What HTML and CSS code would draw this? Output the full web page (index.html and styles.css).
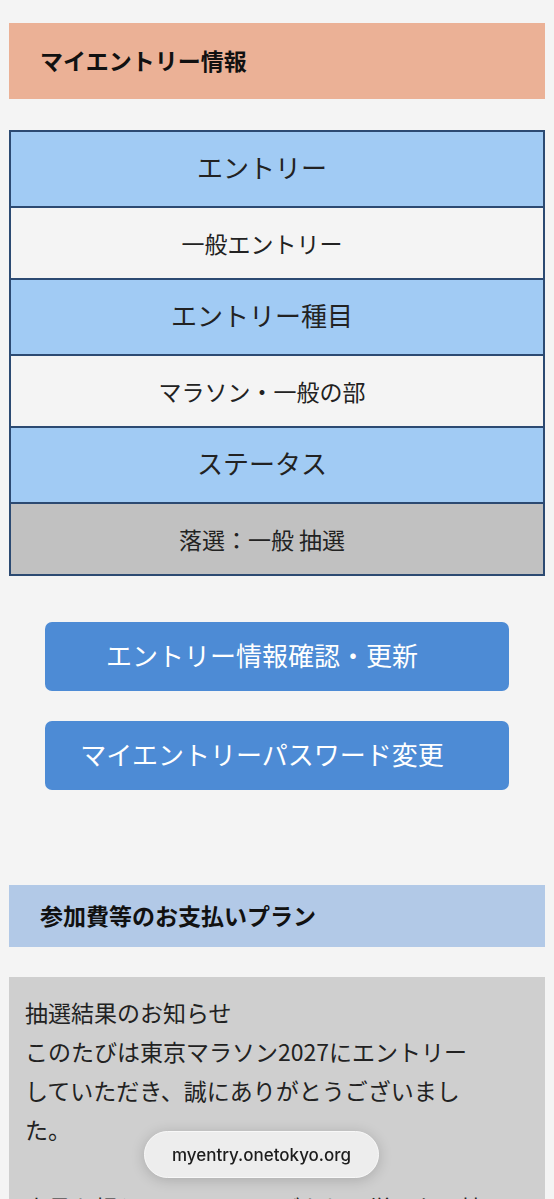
FILE: index.html
```html
<!DOCTYPE html>
<html lang="ja">
<head>
<meta charset="utf-8">
<meta name="viewport" content="width=device-width, initial-scale=1">
<title>マイエントリー情報</title>
<link rel="stylesheet" href="styles.css">
</head>
<body>
<main class="page">
  <h2 class="section-title section-title--entry">マイエントリー情報</h2>

  <div class="info-table">
    <div class="cell cell--head">エントリー</div>
    <div class="cell cell--value">一般エントリー</div>
    <div class="cell cell--head">エントリー種目</div>
    <div class="cell cell--value">マラソン・一般の部</div>
    <div class="cell cell--head">ステータス</div>
    <div class="cell cell--value cell--status">落選：一般 抽選</div>
  </div>

  <div class="actions">
    <a class="btn" href="#">エントリー情報確認・更新</a>
    <a class="btn" href="#">マイエントリーパスワード変更</a>
  </div>

  <h2 class="section-title section-title--pay">参加費等のお支払いプラン</h2>

  <div class="notice">
    <p>抽選結果のお知らせ<br>このたびは東京マラソン2027にエントリーしていただき、誠にありがとうございました。<br><br>定員を超えるエントリーがあり、厳正なる抽選を行いました結果、誠に残念ながら落選となりました。</p>
  </div>
</main>

<div class="urlbar">myentry.onetokyo.org</div>
</body>
</html>
```

FILE: styles.css
```css
html, body {
  margin: 0;
  padding: 0;
  background: #f4f4f4;
}

body {
  font-family: "Noto Sans CJK JP", "Noto Sans", sans-serif;
  color: #222;
}

.page {
  padding: 23px 9px 40px;
  display: flex;
  flex-direction: column;
}

.section-title {
  margin: 0;
  padding: 0 31px 3px;
  box-sizing: border-box;
  display: flex;
  align-items: center;
  font-size: 23px;
  font-weight: 700;
  color: #111;
}

.section-title--entry {
  height: 76px;
  background: #ebb196;
}

.section-title--pay {
  height: 62px;
  background: #b2c9e7;
  margin-top: 95px;
}

.info-table {
  margin-top: 31px;
  border: 2px solid #2c4a72;
  display: flex;
  flex-direction: column;
}

.cell {
  display: flex;
  align-items: center;
  justify-content: center;
  box-sizing: border-box;
  padding-right: 30px;
}

.cell + .cell {
  border-top: 2px solid #2c4a72;
}

.cell--head {
  height: 76px;
  padding-bottom: 6px;
  background: #a1cbf4;
  font-size: 26px;
}

.cell--head:first-child {
  height: 74px;
}

.cell--value {
  height: 72px;
  background: #f4f4f4;
  font-size: 23px;
}

.cell--status {
  background: #c1c1c1;
}

.actions {
  margin-top: 46px;
  padding: 0 36px;
  display: flex;
  flex-direction: column;
  gap: 30px;
}

.btn {
  height: 69px;
  box-sizing: border-box;
  padding: 0 30px 5px 0;
  border-radius: 7px;
  background: #4d8bd5;
  color: #fff;
  font-size: 26px;
  text-decoration: none;
  display: flex;
  align-items: center;
  justify-content: center;
}

.notice {
  margin-top: 30px;
  background: #cfcfcf;
  padding: 16px 59px 16px 16px;
}

.notice p {
  margin: 0;
  font-size: 23px;
  line-height: 39px;
  color: #222;
}

.urlbar {
  position: fixed;
  left: 144px;
  bottom: 21px;
  width: 235px;
  height: 47px;
  box-sizing: border-box;
  border-radius: 24px;
  background: #ededed;
  border: 1px solid #f8f8f8;
  box-shadow: 0 2px 14px rgba(0, 0, 0, 0.18);
  display: flex;
  align-items: center;
  justify-content: center;
  font-family: Inter, "Noto Sans", sans-serif;
  font-size: 17px;
  font-weight: 500;
  color: #1c1c1c;
}
```
